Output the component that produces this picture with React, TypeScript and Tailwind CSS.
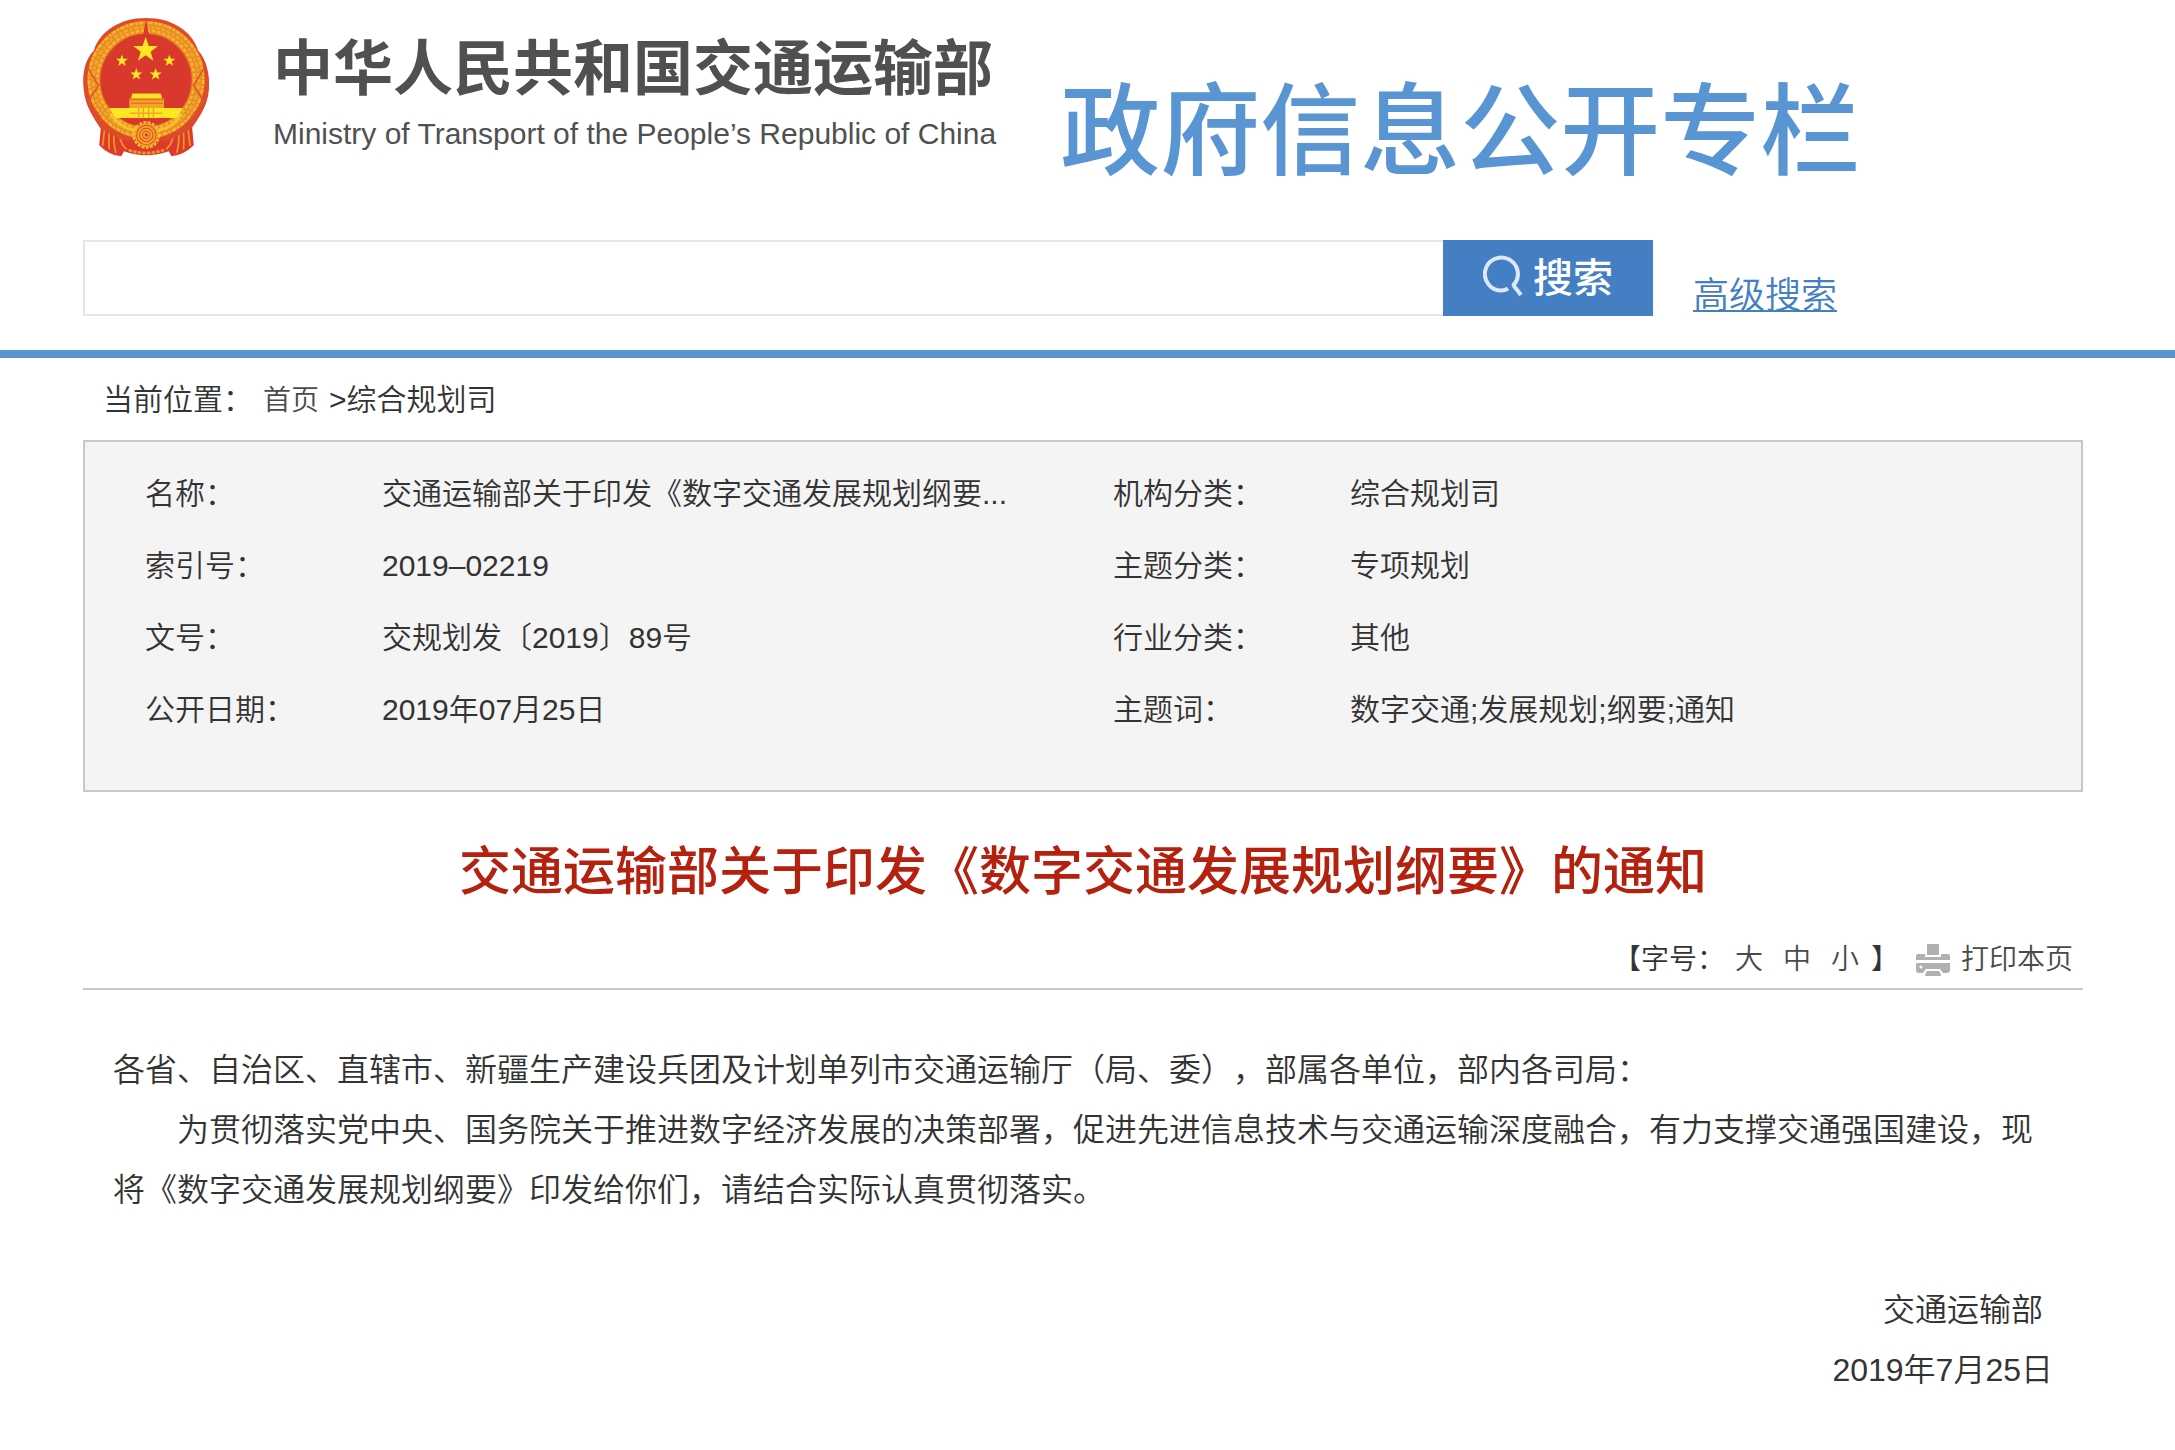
import React from 'react';

const details = [
  ['名称：', '交通运输部关于印发《数字交通发展规划纲要...', '机构分类：', '综合规划司'],
  ['索引号：', '2019–02219', '主题分类：', '专项规划'],
  ['文号：', '交规划发〔2019〕89号', '行业分类：', '其他'],
  ['公开日期：', '2019年07月25日', '主题词：', '数字交通;发展规划;纲要;通知'],
];

const star = 'M0-10 2.4-3.1 9.5-3.1 3.8 1.2 5.9 8.1 0 3.9-5.9 8.1-3.8 1.2-9.5-3.1-2.4-3.1Z';

function Emblem() {
  return (
    <svg viewBox="70 53 376 416" className="w-[126px] h-[139px] shrink-0" role="img" aria-label="国徽">
      <path d="M124 370 118 434Q150 466 184 467L192 452Q258 476 326 452L334 467Q370 464 401 434L395 370Z" fill="#dc3a2a" />
      <g fill="none" stroke="#ee9a22" strokeWidth="5">
        <path d="M134 388Q130 420 128 436M148 392Q146 425 148 446M162 398Q160 430 168 456M178 404Q182 430 200 446" />
        <path d="M384 388Q388 420 390 436M370 392Q372 425 370 446M356 398Q358 430 350 456M340 404Q336 430 318 446" />
        <path d="M206 448Q258 466 312 448" strokeWidth="8" strokeDasharray="10 4" />
      </g>
      <path d="M258 53C180 53 120 92 102 150C72 180 66 230 72 270C76 315 100 350 122 384L190 420H326L394 384C418 350 442 315 446 270C450 230 442 180 414 150C396 92 336 53 258 53Z" fill="#dd4a2c" />
      <g fill="none">
        <ellipse cx="258" cy="238" rx="156" ry="157" stroke="#e98c26" strokeWidth="38" />
        <ellipse cx="258" cy="238" rx="171" ry="171" stroke="#f3b62c" strokeWidth="8" strokeDasharray="13 5 7 4" />
        <ellipse cx="258" cy="238" rx="158" ry="158" stroke="#f0a82a" strokeWidth="8" strokeDasharray="8 6 14 5" />
        <ellipse cx="258" cy="238" rx="145" ry="147" stroke="#f4b62b" strokeWidth="8" strokeDasharray="11 5" />
        <path d="M82 200 116 255 86 300 126 356M434 200 400 255 430 300 390 356" stroke="#e0562a" strokeWidth="5" />
      </g>
      <ellipse cx="257" cy="240" rx="135" ry="138" fill="#d9382c" />
      <path d="M248 112 258 56 268 112Z" fill="#d9382c" />
      <g fill="#fde725">
        <path d={star} transform="translate(257 149) scale(3.9)" />
        <path d={star} transform="translate(186 181) scale(1.9)" />
        <path d={star} transform="translate(328 181) scale(1.9)" />
        <path d={star} transform="translate(229 222) scale(1.9)" />
        <path d={star} transform="translate(287 222) scale(1.9)" />
        <path d="M217 279H302L306 294H213Z" />
        <path d="M148 322H368L352 352H166Z" />
      </g>
      <path d="M208 294H312V322H208Z" fill="#f3a626" />
      <path d="M208 298H312M212 308H308" stroke="#e0622a" strokeWidth="3" />
      <path d="M210 338H306M236 322V350M250 322V350M266 322V350M280 322V350" stroke="#f0a428" strokeWidth="4" />
      <path d="M150 340Q180 382 222 388M366 340Q338 382 296 388" fill="none" stroke="#f5c22c" strokeWidth="8" />
      <circle cx="259" cy="403" r="38" fill="none" stroke="#f5c22c" strokeWidth="7" strokeDasharray="9 4" />
      <circle cx="259" cy="403" r="35" fill="#f2a628" />
      <g fill="none" stroke="#de4a2b" strokeWidth="3">
        <circle cx="259" cy="403" r="29" />
        <circle cx="259" cy="403" r="20" />
        <circle cx="259" cy="403" r="11" />
      </g>
      <circle cx="259" cy="403" r="5" fill="#d9382c" />
    </svg>
  );
}

function SearchIcon() {
  return (
    <svg viewBox="0 0 40 42" className="w-10 h-[42px]" fill="none" stroke="#dbe8f8" strokeWidth="4">
      <path d="M25 33.5Q22 35.500 18.500 35.500A16.500 16.500 0 1 1 31.500 29Q30 29.500 31 31L38 40" />
    </svg>
  );
}

function PrinterIcon() {
  return (
    <svg viewBox="0 0 36 34" className="w-9 h-[34px]" fill="#b0b0b0">
      <path d="M12 1H24V12H12ZM1 17V13Q1 11 3 11H10V14H26V11H33Q35 11 35 13V17Z" />
      <path d="M1 20H35V27Q35 30 32 30H28L25 26H11L8 30H4Q1 30 1 27Z" />
      <path d="M12 28H24Q26 30 26 33H10Q10 30 12 28Z" />
      <circle cx="6" cy="24" r="1.5" fill="#fff" />
    </svg>
  );
}

function Header() {
  return (
    <header className="border-b-8 border-[#5995d3] pl-[83px] pr-[92px] pb-[34px]">
      <div className="flex items-start h-[240px] pt-[18px]">
        <Emblem />
        <div className="ml-16 pt-4 text-[#505050]">
          <div className="text-[60px] leading-[72px] font-bold whitespace-nowrap">中华人民共和国交通运输部</div>
          <div className="text-[30px] leading-[56px] whitespace-nowrap">
            Ministry of Transport of the People’s Republic of China
          </div>
        </div>
        <h1 className="ml-[64px] pt-[54px] text-[100px] leading-[120px] font-medium text-[#5995d3] whitespace-nowrap">政府信息公开专栏</h1>
      </div>
      <form className="flex items-start" onSubmit={(e) => e.preventDefault()}>
        <input type="text" aria-label="搜索" className="w-[68%] h-[76px] px-4 text-[32px] border-2 border-r-0 border-[#e6e6e6] outline-none" />
        <button type="submit" className="flex items-center justify-center gap-[10px] w-[210px] h-[76px] pb-1 bg-[#447fc4] text-white text-[40px] leading-[60px] font-medium">
          <SearchIcon />
          <span className="pt-1">搜索</span>
        </button>
        <a href="#" className="ml-10 mt-9 text-[36px] leading-10 text-[#447fc4] underline underline-offset-2 decoration-2">高级搜索</a>
      </form>
    </header>
  );
}

export default function App() {
  return (
    <div className="min-h-screen bg-white text-[#333] [font-weight:350] [text-spacing-trim:space-all] font-['Liberation_Sans','Noto_Sans_CJK_SC',sans-serif]">
      <Header />
      <main className="pl-[83px] pr-[92px]">
        <nav className="flex items-baseline h-[82px] pl-5 text-[30px] leading-[84px] whitespace-pre">
          <span>当前位置：</span>
          <a href="#" className="ml-[10px] mr-[10px] text-[28px] text-[#4a4a4a]">首页</a>
          <span>&gt;综合规划司</span>
        </nav>

        <section className="h-[352px] pt-4 pl-[60px] bg-[#f4f4f4] border-2 border-[#c8c8c8]">
          <table className="w-full table-fixed text-left text-[30px] leading-[72px]">
            <colgroup>
              <col className="w-[237px]" />
              <col className="w-[731px]" />
              <col className="w-[237px]" />
              <col />
            </colgroup>
            <tbody>
              {details.map((row) => (
                <tr key={row[0]}>
                  <th scope="row" className="p-0 [font-weight:350]">{row[0]}</th>
                  <td className="p-0">{row[1]}</td>
                  <th scope="row" className="p-0 [font-weight:350]">{row[2]}</th>
                  <td className="p-0">{row[3]}</td>
                </tr>
              ))}
            </tbody>
          </table>
        </section>

        <article>
          <h2 className="pt-11 text-center text-[52px] leading-[72px] font-medium text-[#b4220f]">
            交通运输部关于印发《数字交通发展规划纲要》的通知
          </h2>
          <div className="flex items-center justify-end h-[82px] pt-6 pr-[10px] text-[28px] border-b-2 border-[#c8c8c8]">
            <span>【字号：</span>
            <div className="flex gap-5 ml-[10px] mr-3 text-[#4a4a4a]">
              <button type="button">大</button>
              <button type="button">中</button>
              <button type="button">小</button>
            </div>
            <span>】</span>
            <button type="button" className="flex items-center gap-[10px] ml-4 text-[#4a4a4a]">
              <PrinterIcon />
              打印本页
            </button>
          </div>
          <div className="pt-[50px] px-[30px] text-[32px] leading-[60px]">
            <p>各省、自治区、直辖市、新疆生产建设兵团及计划单列市交通运输厅（局、委），部属各单位，部内各司局：</p>
            <p className="indent-[64px]">
              为贯彻落实党中央、国务院关于推进数字经济发展的决策部署，促进先进信息技术与交通运输深度融合，有力支撑交通强国建设，现将《数字交通发展规划纲要》印发给你们，请结合实际认真贯彻落实。
            </p>
            <p className="mt-[60px] pr-[10px] text-right">交通运输部</p>
            <p className="text-right">2019年7月25日</p>
          </div>
        </article>
      </main>
    </div>
  );
}
